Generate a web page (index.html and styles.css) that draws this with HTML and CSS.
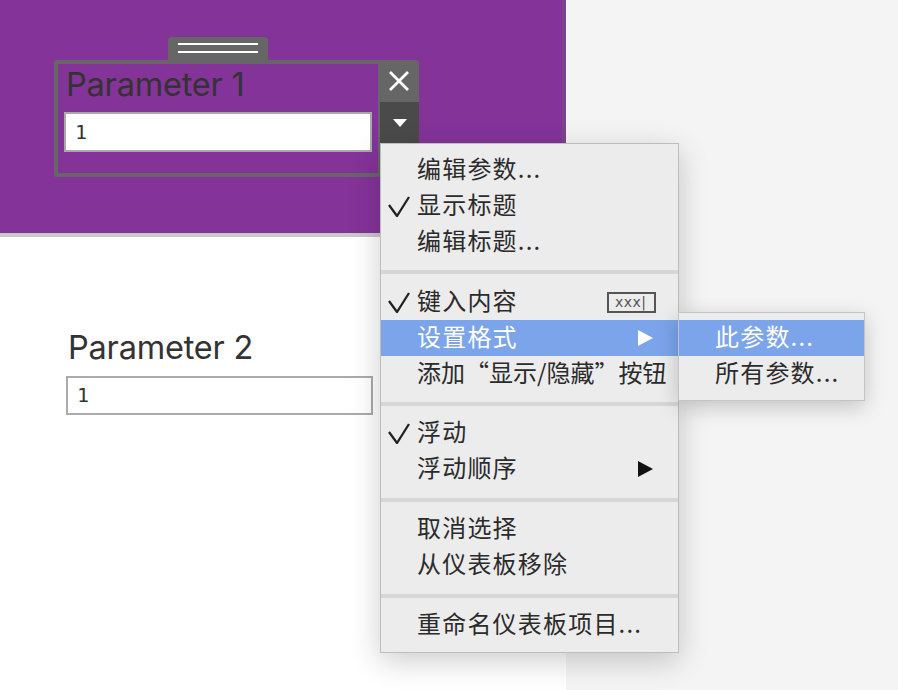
FILE: index.html
```html
<!DOCTYPE html>
<html lang="zh">
<head>
<meta charset="utf-8">
<title>Parameter menu</title>
<link rel="stylesheet" href="styles.css">
</head>
<body>
<div class="page">
  <div class="dashboard">
    <div class="purple-band">
      <div class="handle"><span class="handle-line"></span><span class="handle-line"></span></div>
      <div class="float-frame">
        <div class="param-title">Parameter 1</div>
        <div class="param-input">1</div>
      </div>
      <div class="float-controls">
        <div class="ctrl-close">
          <svg width="22" height="22" viewBox="0 0 22 22"><path d="M2 2 L20 20 M20 2 L2 20" stroke="#fff" stroke-width="2.8" fill="none"/></svg>
        </div>
        <div class="ctrl-drop">
          <svg width="16" height="10" viewBox="0 0 16 10"><path d="M1 1 L15 1 L8 9 Z" fill="#fff"/></svg>
        </div>
      </div>
    </div>
    <div class="param2">
      <div class="param2-title">Parameter 2</div>
      <div class="param2-input">1</div>
    </div>
  </div>
  <div class="side"></div>

  <div class="menu">
    <div class="menu-section first">
      <div class="item">编辑参数...</div>
      <div class="item"><svg class="check" width="22" height="21" viewBox="0 0 22 21"><polyline points="1,9 9,20 21,1" fill="none" stroke="#222" stroke-width="2.3"/></svg>显示标题</div>
      <div class="item">编辑标题...</div>
    </div>
    <div class="sep"></div>
    <div class="menu-section second">
      <div class="item"><svg class="check" width="22" height="21" viewBox="0 0 22 21"><polyline points="1,9 9,20 21,1" fill="none" stroke="#222" stroke-width="2.3"/></svg>键入内容<span class="type-icon">xxx|</span></div>
      <div class="item active">设置格式<svg class="arrow" width="15" height="16" viewBox="0 0 15 16"><path d="M0 0 L15 8 L0 16 Z" fill="#fff"/></svg></div>
      <div class="item tight">添加“显示/隐藏”按钮</div>
    </div>
    <div class="sep"></div>
    <div class="menu-section">
      <div class="item"><svg class="check" width="22" height="21" viewBox="0 0 22 21"><polyline points="1,9 9,20 21,1" fill="none" stroke="#222" stroke-width="2.3"/></svg>浮动</div>
      <div class="item">浮动顺序<svg class="arrow" width="15" height="16" viewBox="0 0 15 16"><path d="M0 0 L15 8 L0 16 Z" fill="#111"/></svg></div>
    </div>
    <div class="sep"></div>
    <div class="menu-section">
      <div class="item">取消选择</div>
      <div class="item">从仪表板移除</div>
    </div>
    <div class="sep"></div>
    <div class="menu-section last">
      <div class="item">重命名仪表板项目...</div>
    </div>
  </div>

  <div class="submenu">
    <div class="item active">此参数...</div>
    <div class="item">所有参数...</div>
  </div>
</div>
</body>
</html>
```

FILE: styles.css
```css
* { box-sizing: border-box; }
html, body { margin: 0; padding: 0; }
body {
  width: 898px;
  height: 690px;
  overflow: hidden;
  font-family: "Noto Sans", "Noto Sans CJK SC", sans-serif;
  color: #2b2b2b;
}
.page {
  position: relative;
  display: flex;
  width: 898px;
  height: 690px;
}
.dashboard {
  width: 566px;
  height: 690px;
  background: #ffffff;
  display: flex;
  flex-direction: column;
}
.side {
  flex: 1;
  background: #f4f4f4;
}
.purple-band {
  position: relative;
  height: 237px;
  background: #843399;
  border-right: 4px solid #7a4489;
  border-bottom: 4px solid #c9c9c9;
}
.handle {
  position: absolute;
  left: 168px;
  top: 37px;
  width: 100px;
  height: 26px;
  background: #666666;
  border-radius: 4px 4px 0 0;
  display: flex;
  flex-direction: column;
  align-items: center;
  padding-top: 6px;
  gap: 6px;
}
.handle-line {
  display: block;
  width: 80px;
  height: 2px;
  background: #ffffff;
}
.float-frame {
  position: absolute;
  left: 54px;
  top: 60px;
  width: 328px;
  height: 117px;
  border: 4px solid #666666;
  border-radius: 3px;
  padding: 0 0 0 6px;
}
.param-title {
  font-family: "Inter", "Noto Sans", sans-serif;
  font-size: 32.5px;
  line-height: 38px;
  margin: 2px 0 0 2px;
  color: #333333;
  letter-spacing: -0.2px;
}
.param-input {
  margin-top: 8px;
  width: 308px;
  height: 40px;
  background: #ffffff;
  border: 2px solid #a9a9a9;
  font-family: "DejaVu Sans Mono", monospace;
  font-size: 20px;
  line-height: 36px;
  padding-left: 9px;
  color: #333;
}
.float-controls {
  position: absolute;
  left: 378px;
  top: 60px;
  width: 41px;
  display: flex;
  flex-direction: column;
}
.ctrl-close {
  height: 42px;
  background: #666666;
  border-radius: 0 4px 0 0;
  display: flex;
  align-items: center;
  justify-content: center;
}
.ctrl-drop {
  height: 41px;
  margin-left: 2px;
  background: #4a4a4a;
  display: flex;
  align-items: center;
  justify-content: center;
}
.param2 {
  padding: 92px 0 0 66px;
}
.param2-title {
  font-family: "Inter", "Noto Sans", sans-serif;
  font-size: 32.5px;
  line-height: 38px;
  margin-left: 2px;
  color: #333333;
  letter-spacing: -0.2px;
}
.param2-input {
  margin-top: 9px;
  width: 307px;
  height: 39px;
  border: 2px solid #aaaaaa;
  background: #fff;
  font-family: "DejaVu Sans Mono", monospace;
  font-size: 20px;
  line-height: 35px;
  padding-left: 9px;
  color: #333;
}
.menu {
  position: absolute;
  left: 380px;
  top: 143px;
  width: 299px;
  background: #ececec;
  border: 1px solid #bdbdbd;
  box-shadow: 0 8px 28px rgba(0, 0, 0, 0.2);
}
.menu-section {
  padding: 9px 0 11px;
}
.menu-section.first {
  padding: 8px 0 10px;
}
.menu-section.second {
  padding: 10px 0 10px;
}
.menu-section.last {
  padding: 9px 0 9px;
}
.sep {
  height: 4px;
  background: #d6d6d6;
}
.item {
  position: relative;
  height: 36px;
  padding-left: 36px;
  font-family: "Noto Sans CJK SC", "Noto Sans", sans-serif;
  font-size: 24px;
  letter-spacing: 1.2px;
  line-height: 31px;
  color: #2b2b2b;
  white-space: nowrap;
}
.item.tight {
  letter-spacing: 0;
}
.item.active {
  background: #7ba4ea;
  color: #ffffff;
}
.check {
  position: absolute;
  left: 7px;
  top: 8px;
}
.arrow {
  position: absolute;
  left: 257px;
  top: 10px;
}
.type-icon {
  position: absolute;
  left: 226px;
  top: 8px;
  width: 49px;
  height: 21px;
  border: 2px solid #555555;
  font-family: "DejaVu Sans", sans-serif;
  font-size: 14px;
  line-height: 16px;
  letter-spacing: 0.5px;
  color: #555555;
  padding-left: 6px;
}
.submenu {
  position: absolute;
  left: 678px;
  top: 312px;
  width: 187px;
  background: #ececec;
  border: 1px solid #c4c4c4;
  box-shadow: 0 6px 20px rgba(0, 0, 0, 0.2);
  padding: 7px 0 8px;
}
.submenu .item {
  padding-left: 36px;
}
```
